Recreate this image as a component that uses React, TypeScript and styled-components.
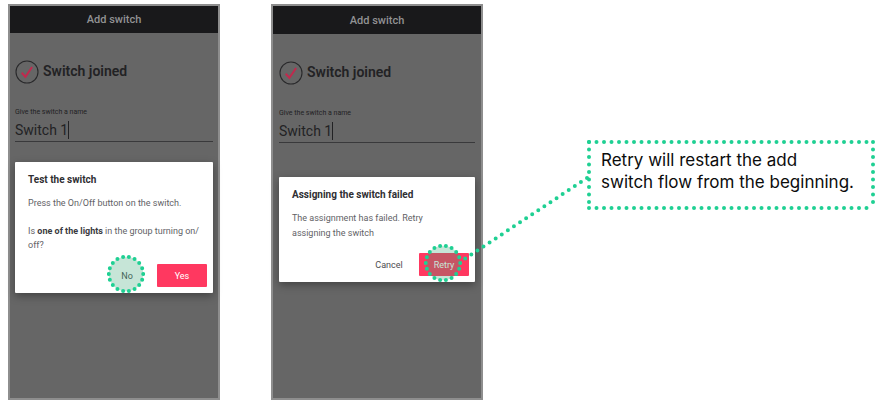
import React from "react";
import styled, { createGlobalStyle } from "styled-components";

const GREEN = "#1fd093";
const RED = "#ff3860";

const GlobalStyle = createGlobalStyle`
  *, *::before, *::after { box-sizing: border-box; }
  body { margin: 0; background: #fff; }
  button, input { font: inherit; color: inherit; margin: 0; }
`;

const Board = styled.main`
  display: grid;
  grid-template-columns: 475fr 104fr 288fr;
  align-items: start;
  padding: 4px 17px 8px 8px;
  font-family: Roboto, "Liberation Sans", sans-serif;
`;

const Screens = styled.div`
  display: grid;
  grid-template-columns: 1fr 1fr;
  column-gap: 51px;
`;

const Phone = styled.section`
  position: relative;
  aspect-ratio: 212 / 396;
  border: 2px solid #8e8e8e;
  background: #666;
  color: #222224;
`;

const TopBar = styled.header<{ $height: number }>`
  display: flex;
  align-items: center;
  justify-content: center;
  height: ${(p) => p.$height}px;
  background: #19191b;
  color: #929294;
  font-size: 11px;
  font-weight: 500;
`;

const Content = styled.div<{ $inset: number }>`
  padding: 27px ${(p) => p.$inset}px 0;
`;

const Joined = styled.div`
  display: flex;
  align-items: center;
  gap: 4px;
  height: 24px;
`;

const JoinedTitle = styled.h2`
  margin: 0;
  padding-bottom: 2px;
  font-size: 14px;
  line-height: 20px;
  font-weight: 600;
`;

const FieldLabel = styled.label`
  display: block;
  margin-top: 23px;
  font-size: 7px;
  line-height: 10px;
`;

const FieldRow = styled.div`
  display: flex;
  align-items: center;
  height: 25px;
  padding-top: 1px;
  border-bottom: 1px solid #39393b;
`;

const NameInput = styled.input`
  field-sizing: content;
  padding: 0;
  border: 0;
  outline: 0;
  background: transparent;
  font-size: 14px;
  line-height: 20px;
`;

const Caret = styled.span`
  width: 1px;
  height: 18px;
  background: #222224;
`;

const Overlay = styled.div<{ $top: number; $inset: number }>`
  position: absolute;
  inset: 0;
  padding: ${(p) => p.$top}px ${(p) => p.$inset}px 0;
`;

const Dialog = styled.div`
  padding: 11px 6px 6px 13px;
  border-radius: 1px;
  background: #fff;
  box-shadow: 0 3px 9px rgba(0, 0, 0, 0.35);
`;

const DialogTitle = styled.h3`
  margin: 0 0 9px;
  color: #2f2f33;
  font-size: 10px;
  line-height: 14px;
  font-weight: 700;
`;

const DialogText = styled.div<{ $line: number }>`
  color: #626266;
  font-size: 9px;
  line-height: ${(p) => p.$line}px;

  p {
    margin: 0;
  }

  p + p {
    margin-top: ${(p) => p.$line}px;
  }

  strong {
    color: #3a3a3e;
    font-weight: 700;
  }
`;

const Actions = styled.div`
  display: flex;
  justify-content: flex-end;
  gap: 5px;
  margin-top: 12px;
`;

const ActionButton = styled.button<{ $primary?: boolean }>`
  position: relative;
  width: 50px;
  height: 23px;
  padding: 0;
  border: 0;
  border-radius: 1px;
  background: ${(p) => (p.$primary ? RED : "transparent")};
  color: ${(p) => (p.$primary ? "#fff" : "#4c4c50")};
  font-size: 9px;
  font-weight: 400;
`;

const MarkerSvg = styled.svg`
  position: absolute;
  top: -9px;
  left: 5px;
  pointer-events: none;
`;

const ConnectorCell = styled.div`
  position: relative;
`;

const ConnectorSvg = styled.svg`
  position: absolute;
  top: 174px;
  left: -23px;
  width: calc(100% + 23px);
  height: 84px;
  overflow: visible;
`;

const Note = styled.aside`
  position: relative;
  margin-top: 136px;
  padding: 9px 0 17px 14px;
  color: #0c0c0c;
  font-family: Inter, "Liberation Sans", sans-serif;
  font-size: 17px;
  line-height: 22px;

  p {
    margin: 0;
  }
`;

const NoteFrame = styled.svg`
  position: absolute;
  inset: 2px;
  width: calc(100% - 4px);
  height: calc(100% - 4px);
  overflow: visible;
`;

const dots = {
  stroke: GREEN,
  strokeWidth: 4,
  strokeLinecap: "round" as const,
};

function Marker() {
  return (
    <MarkerSvg width="38" height="38" viewBox="0 0 38 38" aria-hidden="true">
      <circle
        cx="19"
        cy="19"
        r="17.2"
        fill="rgba(50,160,110,0.28)"
        {...dots}
        pathLength={180}
        strokeDasharray="0 10"
      />
    </MarkerSvg>
  );
}

function CheckIcon() {
  return (
    <svg width="24" height="24" viewBox="0 0 24 24" fill="none" aria-hidden="true">
      <circle cx="12" cy="12" r="11" stroke="#29292b" strokeWidth="1.1" />
      <path d="M6.7 12.8 10.4 16.8 17.1 7" stroke="#c02a4e" strokeWidth="2" />
    </svg>
  );
}

type ScreenProps = {
  id: string;
  barHeight: number;
  inset: number;
  dialogTop: number;
  children: React.ReactNode;
};

function SwitchScreen({ id, barHeight, inset, dialogTop, children }: ScreenProps) {
  return (
    <Phone>
      <TopBar $height={barHeight}>Add switch</TopBar>
      <Content $inset={inset}>
        <Joined>
          <CheckIcon />
          <JoinedTitle>Switch joined</JoinedTitle>
        </Joined>
        <FieldLabel htmlFor={id}>Give the switch a name</FieldLabel>
        <FieldRow>
          <NameInput id={id} type="text" defaultValue="Switch 1" />
          <Caret />
        </FieldRow>
      </Content>
      <Overlay $top={dialogTop} $inset={inset}>
        {children}
      </Overlay>
    </Phone>
  );
}

export default function App() {
  return (
    <>
      <GlobalStyle />
      <Board>
        <Screens>
          <SwitchScreen id="name-test" barHeight={27} inset={5} dialogTop={156}>
            <Dialog role="dialog" aria-labelledby="test-title">
              <DialogTitle id="test-title">Test the switch</DialogTitle>
              <DialogText $line={14}>
                <p>Press the On/Off button on the switch.</p>
                <p>
                  Is <strong>one of the lights</strong> in the group turning on/<wbr />
                  off?
                </p>
              </DialogText>
              <Actions>
                <ActionButton type="button">
                  No
                  <Marker />
                </ActionButton>
                <ActionButton type="button" $primary>
                  Yes
                </ActionButton>
              </Actions>
            </Dialog>
          </SwitchScreen>
          <SwitchScreen id="name-failed" barHeight={28} inset={6} dialogTop={171}>
            <Dialog role="dialog" aria-labelledby="failed-title">
              <DialogTitle id="failed-title">Assigning the switch failed</DialogTitle>
              <DialogText $line={15}>
                <p>
                  The assignment has failed. Retry
                  <br />
                  assigning the switch
                </p>
              </DialogText>
              <Actions>
                <ActionButton type="button">Cancel</ActionButton>
                <ActionButton type="button" $primary>
                  Retry
                  <Marker />
                </ActionButton>
              </Actions>
            </Dialog>
          </SwitchScreen>
        </Screens>
        <ConnectorCell>
          <ConnectorSvg aria-hidden="true">
            <line x1="100%" y1="0" x2="0" y2="100%" {...dots} strokeDasharray="0 7.3" />
          </ConnectorSvg>
        </ConnectorCell>
        <Note>
          <NoteFrame aria-hidden="true">
            <g {...dots} strokeDasharray="0 7.5">
              <line x1="0" y1="0" x2="100%" y2="0" />
              <line x1="0" y1="100%" x2="100%" y2="100%" />
              <line x1="0" y1="0" x2="0" y2="100%" />
              <line x1="100%" y1="0" x2="100%" y2="100%" />
            </g>
          </NoteFrame>
          <p>
            Retry will restart the add
            <br />
            switch flow from the beginning.
          </p>
        </Note>
      </Board>
    </>
  );
}
